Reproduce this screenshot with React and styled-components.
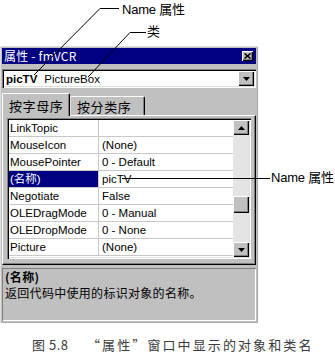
import React from 'react';
import styled, { createGlobalStyle } from 'styled-components';

const GlobalStyle = createGlobalStyle`
  html, body {
    margin: 0;
    padding: 0;
    background: #fff;
  }
  body {
    font-family: "Liberation Sans", "Noto Sans CJK SC", sans-serif;
    color: #000;
  }
`;

const UI = `"Liberation Sans", "Noto Sans CJK SC", sans-serif`;
const CJK = `"Noto Sans CJK SC", "Liberation Sans", sans-serif`;

const raised = `
  box-shadow: inset 1px 1px #fff, inset -1px -1px #000, inset -2px -2px #808080;
`;
const sunken = `
  box-shadow: inset 1px 1px #808080, inset 2px 2px #000, inset -1px -1px #fff, inset -2px -2px #dfdfdf;
`;

const Canvas = styled.div`
  position: relative;
  width: 335px;
  height: 356px;
  overflow: hidden;
  display: flex;
  flex-direction: column;
`;

const Window = styled.div`
  margin-top: 46px;
  width: 258px;
  box-sizing: border-box;
  padding: 2px;
  background: #c0c0c0;
  box-shadow: inset 1px 1px #dfdfdf, inset -1px -1px #a8a8a8;
  display: flex;
  flex-direction: column;
`;

const TitleBar = styled.div`
  height: 16px;
  background: #000080;
  color: #fff;
  display: flex;
  align-items: center;
  justify-content: space-between;
  padding: 0 3px 0 2px;
  font-family: ${CJK};
  font-size: 12px;
  line-height: 16px;
`;

const TitleText = styled.span`
  white-space: nowrap;
  letter-spacing: 0.2px;
`;

const CloseButton = styled.div`
  width: 11px;
  height: 10px;
  background: #c0c0c0;
  ${raised}
  display: flex;
  align-items: center;
  justify-content: center;
`;

const Combo = styled.div`
  margin-top: 5px;
  height: 19px;
  background: #fff;
  ${sunken}
  display: flex;
  align-items: center;
  padding: 0 2px 0 4px;
  font-family: ${UI};
  font-size: 11.5px;
`;

const ObjectName = styled.b`
  font-weight: bold;
  margin-right: 7px;
`;

const ComboText = styled.span`
  flex: 1;
`;

const DropButton = styled.div`
  width: 16px;
  height: 15px;
  background: #c0c0c0;
  ${raised}
  display: flex;
  align-items: center;
  justify-content: center;
`;

const TabStrip = styled.div`
  margin-top: 4px;
  height: 23px;
  display: flex;
  align-items: flex-end;
  position: relative;
  z-index: 1;
`;

const Tab = styled.div`
  width: ${p => p.$w}px;
  height: ${p => (p.$active ? 23 : 19)}px;
  box-sizing: border-box;
  margin-bottom: ${p => (p.$active ? -1 : 0)}px;
  background: #c0c0c0;
  border-top: 1px solid #fff;
  border-left: 1px solid ${p => (p.$active ? '#fff' : '#dfdfdf')};
  border-right: 1px solid #000;
  border-radius: 2px 2px 0 0;
  box-shadow: inset -1px 0 #808080;
  display: flex;
  align-items: center;
  padding-left: 6px;
  font-family: ${CJK};
  font-size: 13px;
  letter-spacing: 0.6px;
  white-space: nowrap;
`;

const Panel = styled.div`
  height: 150px;
  box-sizing: border-box;
  border-top: 1px solid #fff;
  border-left: 1px solid #fff;
  border-right: 1px solid #000;
  border-bottom: 1px solid #000;
  box-shadow: inset -1px -1px #808080;
  padding: 2px 4px 5px 4px;
`;

const Grid = styled.div`
  height: 141px;
  box-sizing: border-box;
  ${sunken}
  padding: 2px;
  background: #fff;
  display: flex;
`;

const Rows = styled.div`
  flex: 1;
  display: flex;
  flex-direction: column;
`;

const Row = styled.div`
  display: grid;
  grid-template-columns: 90px 1fr;
  height: 17px;
  box-sizing: border-box;
  border-bottom: 1px solid #c8c8c8;
  font-family: ${UI};
  font-size: 11.5px;
  line-height: 16px;
`;

const NameCell = styled.div`
  padding-left: 1px;
  border-right: 1px solid #c8c8c8;
  background: ${p => (p.$selected ? '#000080' : 'transparent')};
  color: ${p => (p.$selected ? '#fff' : '#000')};
  white-space: nowrap;
  overflow: hidden;
`;

const ValueCell = styled.div`
  padding-left: 3px;
  white-space: nowrap;
  overflow: hidden;
`;

const ScrollBar = styled.div`
  width: 16px;
  display: flex;
  flex-direction: column;
  background: #e4e4e4;
`;

const ScrollButton = styled.div`
  height: 15px;
  background: #c0c0c0;
  ${raised}
  display: flex;
  align-items: center;
  justify-content: center;
`;

const Track = styled.div`
  flex: 1;
`;

const Thumb = styled.div`
  margin-top: 61px;
  height: 17px;
  background: #c0c0c0;
  ${raised}
`;

const Description = styled.div`
  margin-top: 3px;
  height: 53px;
  box-sizing: border-box;
  box-shadow: inset 1px 1px #808080, inset -1px -1px #fff;
  padding: 1px 3px;
  font-family: ${CJK};
  font-size: 12px;
  line-height: 16px;
  letter-spacing: 0.3px;
`;

const DescTitle = styled.div`
  font-weight: bold;
`;

const Caption = styled.div`
  margin-top: 15px;
  padding-left: 32px;
  display: flex;
  font-family: ${CJK};
  font-size: 13px;
  line-height: 14px;
  color: #3a3a3a;
  white-space: nowrap;
`;

const FigNo = styled.span`
  width: 55px;
  letter-spacing: 0.5px;
`;

const FigText = styled.span`
  letter-spacing: 2.1px;
`;

const Label = styled.div`
  position: absolute;
  left: ${p => p.$x}px;
  top: ${p => p.$y}px;
  font-family: ${UI};
  font-size: 13px;
  line-height: 16px;
  letter-spacing: -0.2px;
  white-space: nowrap;
  z-index: 3;
`;

const Leaders = styled.svg`
  position: absolute;
  left: 0;
  top: 0;
  pointer-events: none;
  z-index: 2;
`;

const Triangle = ({ up }) => (
  <svg width="7" height="4" viewBox="0 0 7 4">
    <polygon points={up ? '3.5,0 7,4 0,4' : '0,0 7,0 3.5,4'} fill="#000" />
  </svg>
);

const properties = [
  ['LinkTopic', ''],
  ['MouseIcon', '(None)'],
  ['MousePointer', '0 - Default'],
  ['(名称)', 'picTV', true],
  ['Negotiate', 'False'],
  ['OLEDragMode', '0 - Manual'],
  ['OLEDropMode', '0 - None'],
  ['Picture', '(None)'],
];

export default function App() {
  return (
    <>
      <GlobalStyle />
      <Canvas>
        <Window>
          <TitleBar>
            <TitleText>属性 - fmVCR</TitleText>
            <CloseButton>
              <svg width="7" height="6" viewBox="0 0 7 6">
                <path d="M0.5 0.5 L6.5 5.5 M6.5 0.5 L0.5 5.5" stroke="#000" strokeWidth="1.6" />
              </svg>
            </CloseButton>
          </TitleBar>

          <Combo>
            <ObjectName>picTV</ObjectName>
            <ComboText>PictureBox</ComboText>
            <DropButton>
              <Triangle />
            </DropButton>
          </Combo>

          <TabStrip>
            <Tab $active $w={68}>按字母序</Tab>
            <Tab $w={75}>按分类序</Tab>
          </TabStrip>

          <Panel>
            <Grid>
              <Rows>
                {properties.map(([name, value, selected]) => (
                  <Row key={name}>
                    <NameCell $selected={selected}>{name}</NameCell>
                    <ValueCell>{value}</ValueCell>
                  </Row>
                ))}
              </Rows>
              <ScrollBar>
                <ScrollButton>
                  <Triangle up />
                </ScrollButton>
                <Track>
                  <Thumb />
                </Track>
                <ScrollButton>
                  <Triangle />
                </ScrollButton>
              </ScrollBar>
            </Grid>
          </Panel>

          <Description>
            <DescTitle>(名称)</DescTitle>
            <div>返回代码中使用的标识对象的名称。</div>
          </Description>
        </Window>

        <Caption>
          <FigNo>图 5.8</FigNo>
          <FigText>“属性”窗口中显示的对象和类名</FigText>
        </Caption>

        <Label $x={122} $y={2}>Name 属性</Label>
        <Label $x={147} $y={24}>类</Label>
        <Label $x={271} $y={170}>Name 属性</Label>

        <Leaders width="335" height="356" viewBox="0 0 335 356">
          <polyline points="119,8.5 100,8.5 34,75" fill="none" stroke="#000" strokeWidth="1" />
          <polyline points="146,32.5 130,32.5 88,77" fill="none" stroke="#000" strokeWidth="1" />
          <line x1="122" y1="178.5" x2="270" y2="178.5" stroke="#000" strokeWidth="1" />
        </Leaders>
      </Canvas>
    </>
  );
}
